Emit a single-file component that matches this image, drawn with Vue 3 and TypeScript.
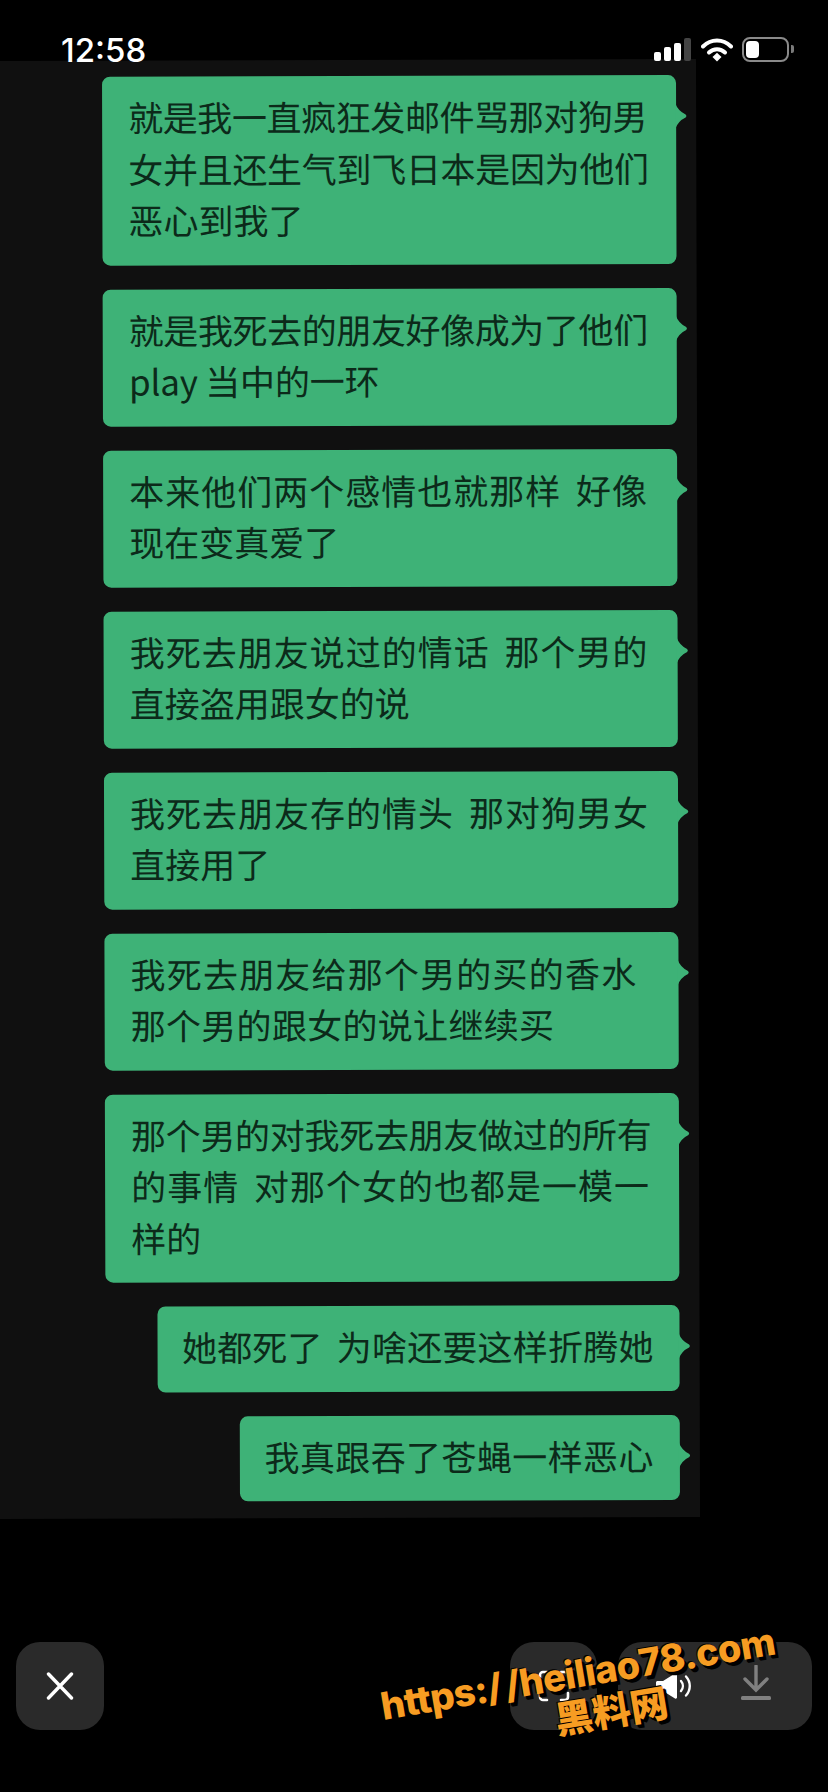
<script setup lang="ts">
interface Line {
  t: string
  s?: number
  w?: number
}

const messages: Line[][] = [
  [
    { t: '就是我一直疯狂发邮件骂那对狗男', s: -0.4 },
    { t: '女并且还生气到飞日本是因为他们', s: -0.3 },
    { t: '恶心到我了' },
  ],
  [{ t: '就是我死去的朋友好像成为了他们', s: -0.4 }, { t: 'play 当中的一环', s: -0.2 }],
  [{ t: '本来他们两个感情也就那样 好像', s: 1, w: 6 }, { t: '现在变真爱了' }],
  [{ t: '我死去朋友说过的情话 那个男的', s: 1, w: 6 }, { t: '直接盗用跟女的说' }],
  [{ t: '我死去朋友存的情头 那对狗男女', s: 1, w: 6 }, { t: '直接用了' }],
  [{ t: '我死去朋友给那个男的买的香水', s: 1.2 }, { t: '那个男的跟女的说让继续买', s: 0.3 }],
  [
    { t: '那个男的对我死去朋友做过的所有', s: -0.3 },
    { t: '的事情 对那个女的也都是一模一', s: 1, w: 6 },
    { t: '样的' },
  ],
  [{ t: '她都死了 为啥还要这样折腾她', s: 0.2, w: 6 }],
  [{ t: '我真跟吞了苍蝇一样恶心', s: 0.4 }],
]

function lineStyle(l: Line) {
  return { letterSpacing: (l.s ?? 0) + 'px', wordSpacing: (l.w ?? 0) + 'px' }
}
</script>

<template>
  <div class="screen">
    <header class="status">
      <span class="time">12:58</span>
      <div class="status-icons">
        <div class="signal">
          <i class="b1"></i><i class="b2"></i><i class="b3"></i><i class="b4"></i>
        </div>
        <svg class="wifi" width="32" height="25" viewBox="0 0 32 25">
          <path d="M2 9.5C10 1.5 22 1.5 30 9.5" fill="none" stroke="#fff" stroke-width="4" stroke-linecap="round" />
          <path d="M8 15.5C12.5 11 19.5 11 24 15.5" fill="none" stroke="#fff" stroke-width="4" stroke-linecap="round" />
          <path d="M11.5 20L16 15.8L20.5 20L16 24.5Z" fill="#fff" />
        </svg>
        <div class="battery"><span class="level"></span></div>
      </div>
    </header>

    <main class="panel">
      <div v-for="(m, i) in messages" :key="i" class="bubble" :class="{ wide: i < 7 }">
        <p v-for="(line, j) in m" :key="j" :style="lineStyle(line)">{{ line.t }}</p>
      </div>
    </main>

    <footer class="toolbar">
      <button class="btn close">
        <svg width="28" height="28" viewBox="0 0 28 28">
          <path d="M2.5 2L25.5 26M25.5 2L2.5 26" stroke="#fff" stroke-width="3.4" stroke-linecap="round" />
        </svg>
      </button>
      <div class="right-group">
        <button class="btn scan">
          <svg width="32" height="32" viewBox="0 0 32 32" fill="none" stroke="#fff" stroke-width="2.6" stroke-linecap="round">
            <path d="M2 9V5a3 3 0 0 1 3-3h4M23 2h4a3 3 0 0 1 3 3v4M30 23v4a3 3 0 0 1-3 3h-4M9 30H5a3 3 0 0 1-3-3v-4" />
            <circle cx="16" cy="17" r="4.5" stroke-width="2" />
          </svg>
        </button>
        <div class="btn pair">
          <svg width="36" height="26" viewBox="0 0 36 26">
            <path d="M1.5 8H7L19 0.5C20 0 21 0.5 21 1.5V24.5C21 25.5 20 26 19 25.5L7 18H1.5C0.7 18 0 17.3 0 16.5V9.5C0 8.7 0.7 8 1.5 8Z" fill="#fff" />
            <path d="M25 8C27.5 11 27.5 15 25 18M30 3.5C35 9 35 17 30 22.5" fill="none" stroke="#fff" stroke-width="2.4" stroke-linecap="round" />
          </svg>
          <svg class="download" width="30" height="35" viewBox="0 0 30 35">
            <path d="M15 1V24M4 14L15 25L26 14" fill="none" stroke="#808080" stroke-width="3.4" stroke-linecap="round" />
            <rect x="0" y="31" width="30" height="4" rx="1.5" fill="#808080" />
          </svg>
        </div>
      </div>
    </footer>

    <div class="watermark">
      <div class="wm-url">https:/ /heiliao78.com</div>
      <div class="wm-name">黑料网</div>
    </div>
  </div>
</template>

<style>
html, body {
  margin: 0;
  background: #000;
}
</style>

<style scoped>
.screen {
  position: relative;
  width: 828px;
  height: 1792px;
  background: #000;
  overflow: hidden;
  font-family: "Noto Sans CJK SC", "Noto Sans", sans-serif;
}

.status {
  height: 60px;
  padding: 0 39px 0 61px;
  box-sizing: border-box;
  display: flex;
  justify-content: space-between;
  align-items: flex-end;
  position: relative;
  z-index: 1;
}
.time {
  font-family: Inter, sans-serif;
  font-size: 33px;
  font-weight: 500;
  line-height: 24px;
  margin-bottom: -2px;
  color: #fff;
}
.status-icons {
  display: flex;
  align-items: flex-end;
  gap: 10px;
  margin-bottom: -2px;
}
.signal {
  display: flex;
  align-items: flex-end;
  gap: 3px;
  height: 24px;
  margin-bottom: 1px;
}
.signal i {
  width: 7px;
  border-radius: 2px;
  background: #fff;
}
.signal .b1 { height: 9px; }
.signal .b2 { height: 14px; }
.signal .b3 { height: 18px; }
.signal .b4 { height: 23px; background: #444; }
.battery {
  position: relative;
  width: 47px;
  height: 25px;
  box-sizing: border-box;
  border: 2.5px solid #8a8a8a;
  border-radius: 8px;
  padding: 2px;
  margin-left: -1px;
}
.battery::after {
  content: "";
  position: absolute;
  right: -7px;
  top: 6px;
  width: 3px;
  height: 8px;
  background: #7a7a7a;
  border-radius: 0 2px 2px 0;
}
.level {
  display: block;
  width: 13px;
  height: 100%;
  background: #fff;
  border-radius: 4px;
}

.panel {
  width: 708px;
  margin-left: -10px;
  height: 1458px;
  box-sizing: border-box;
  background: #101010;
  padding: 16px 20px 0 0;
  display: flex;
  flex-direction: column;
  align-items: flex-end;
  gap: 24px;
  transform: rotate(-0.16deg);
}
.bubble {
  position: relative;
  padding: 14px 26px 20px 24.5px;
  background: #3eb277;
  border-radius: 8px;
  color: #0c2a1a;
  font-size: 35px;
  line-height: 51.5px;
  white-space: pre;
}
.bubble.wide {
  width: 574px;
  box-sizing: border-box;
  padding-left: 26px;
  padding-right: 28px;
}
.bubble p {
  margin: 0;
}
.bubble::after {
  content: "";
  position: absolute;
  right: -11px;
  top: 28px;
  width: 12px;
  height: 26px;
  background: #3eb277;
  clip-path: path("M0 0Q3 8 10.5 11.5Q12 13 10.5 14.5Q3 18 0 26Z");
}

.toolbar {
  margin-top: 124px;
  padding: 0 16px;
  display: flex;
  justify-content: space-between;
}
.right-group {
  display: flex;
  gap: 21px;
}
.btn {
  height: 88px;
  border: 0;
  padding: 0;
  border-radius: 24px;
  background: #2a2a2a;
  display: flex;
  align-items: center;
  justify-content: center;
}
.close {
  width: 88px;
}
.scan {
  width: 87px;
}
.pair {
  width: 194px;
  justify-content: flex-start;
  padding-left: 38px;
  box-sizing: border-box;
  gap: 49px;
}
.download {
  margin-top: -7px;
}

.watermark {
  position: absolute;
  left: 376px;
  top: 1650px;
  width: 410px;
  text-align: center;
  color: #f79c22;
  font-family: Inter, "Noto Sans CJK SC", sans-serif;
  font-weight: 800;
  transform: rotate(-9.5deg);
  text-shadow: 2px 3px 0 #000, 3px 4px 0 #000, -1px -1px 0 #000;
}
.wm-url {
  font-size: 38px;
  line-height: 46px;
  letter-spacing: -0.6px;
  word-spacing: -4px;
  white-space: nowrap;
}
.wm-name {
  font-family: "Noto Sans CJK SC", sans-serif;
  font-weight: 900;
  font-size: 38px;
  line-height: 46px;
  margin-left: 54px;
  margin-top: -5px;
}
</style>
